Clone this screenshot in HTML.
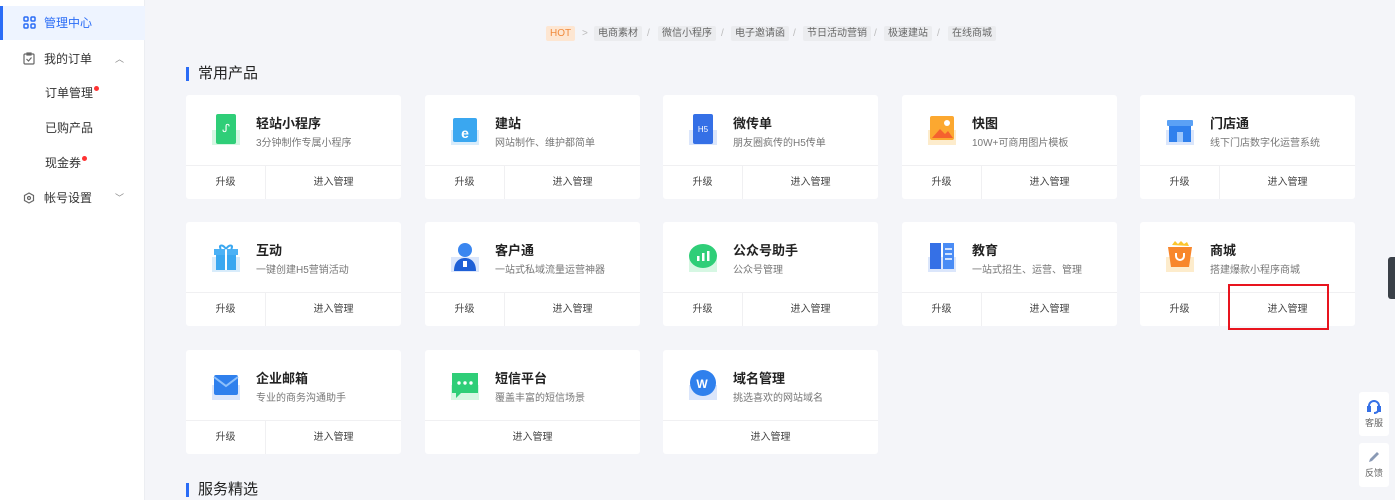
<!DOCTYPE html><html><head><meta charset="utf-8"><style>
*{margin:0;padding:0;box-sizing:border-box}
body{width:1395px;height:500px;overflow:hidden;background:#f4f5f9;font-family:"Liberation Sans","Noto Sans CJK SC",sans-serif;position:relative}
.side{position:absolute;left:0;top:0;width:145px;height:500px;background:#fff;border-right:1px solid #eceef2}
.si{position:absolute;left:0;width:145px;height:34px;line-height:34px;font-size:12px;color:#333}
.act{background:#eef4ff;color:#2a6cf6;border-left:3px solid #2a6cf6}
.dot{display:inline-block;width:5px;height:5px;border-radius:50%;background:#f33;vertical-align:top;margin-top:10px;margin-left:1px}
.bc{position:absolute;top:26px;font-size:10px;color:#666;height:15px;line-height:15px;background:#ebecef;padding:0 4px;border-radius:2px}
.sep{position:absolute;top:26px;font-size:10px;color:#bbb;line-height:15px}
h2{position:absolute;left:186px;font-size:15px;font-weight:normal;color:#222;padding-left:9px;border-left:3px solid #2a6cf6;line-height:14px}
.card{position:absolute;width:215px;height:104px;background:#fff;border-radius:3px}
.ic{position:absolute;left:24px;top:17px;width:32px;height:34px}
.t{position:absolute;left:70px;top:18px;font-size:13px;font-weight:bold;color:#222}
.d{position:absolute;left:70px;top:39px;font-size:10px;color:#777}
.bt{position:absolute;left:0;top:70px;width:215px;height:34px;border-top:1px solid #f0f0f2;font-size:10px;color:#444;line-height:33px}
.up{position:absolute;left:0;width:80px;text-align:center;border-right:1px solid #f0f0f2;height:33px}
.mg{position:absolute;left:80px;width:135px;text-align:center}
.mg2{position:absolute;left:0;width:215px;text-align:center}
.fl{position:absolute;left:1359px;width:30px;height:44px;background:#fff;border-radius:3px;font-size:9px;color:#666;text-align:center}
</style></head><body>
<div class="side">
<div class="si act" style="top:6px;padding-left:20px"><svg width="13" height="13" viewBox="0 0 13 13" style="vertical-align:-2px;margin-right:8px" fill="none" stroke="#2a6cf6" stroke-width="1.5"><rect x="1" y="1" width="4" height="4" rx="1"/><rect x="8" y="1" width="4" height="4" rx="1"/><rect x="1" y="8" width="4" height="4" rx="1"/><rect x="8" y="8" width="4" height="4" rx="1"/></svg>管理中心</div>
<div class="si" style="top:42px;padding-left:23px"><svg width="12" height="13" viewBox="0 0 12 13" style="vertical-align:-2px;margin-right:9px" fill="none" stroke="#666" stroke-width="1.2"><rect x="1" y="2" width="10" height="10" rx="1"/><rect x="4" y="1" width="4" height="2"/><path d="M3.5 7l2 2 3-3.5"/></svg>我的订单<span style="position:absolute;left:115px;color:#888;font-size:9px">︿</span></div>
<div class="si" style="top:76px;padding-left:45px">订单管理<span class="dot"></span></div>
<div class="si" style="top:111px;padding-left:45px">已购产品</div>
<div class="si" style="top:146px;padding-left:45px">现金券<span class="dot"></span></div>
<div class="si" style="top:181px;padding-left:23px"><svg width="12" height="12" viewBox="0 0 12 12" style="vertical-align:-2px;margin-right:9px" fill="none" stroke="#666" stroke-width="1.2"><path d="M6 1l4.5 2.5v5L6 11 1.5 8.5v-5z"/><circle cx="6" cy="6" r="1.5"/></svg>帐号设置<span style="position:absolute;left:115px;color:#888;font-size:9px">﹀</span></div>
</div>
<span class="bc" style="left:546px;background:#fde6d2;color:#f08a3c">HOT</span><span class="sep" style="left:582px">&gt;</span>
<span class="bc" style="left:594px">电商素材</span><span class="sep" style="left:647px">/</span>
<span class="bc" style="left:658px">微信小程序</span><span class="sep" style="left:721px">/</span>
<span class="bc" style="left:731px">电子邀请函</span><span class="sep" style="left:793px">/</span>
<span class="bc" style="left:803px">节日活动营销</span><span class="sep" style="left:874px">/</span>
<span class="bc" style="left:884px">极速建站</span><span class="sep" style="left:937px">/</span>
<span class="bc" style="left:948px">在线商城</span>
<h2 style="top:67px">常用产品</h2>
<h2 style="top:483px">服务精选</h2>

<div class="card" style="left:186px;top:95px"><svg class="ic" viewBox="0 0 32 34"><rect x="2" y="18" width="28" height="15" fill="#d6f7e3"/><rect x="6" y="2" width="20" height="30" rx="2" fill="#2fce78"/><text x="16" y="20" font-size="11" fill="#fff" text-anchor="middle">ᔑ</text></svg><div class="t">轻站小程序</div><div class="d">3分钟制作专属小程序</div><div class="bt"><span class="up">升级</span><span class="mg">进入管理</span></div></div>
<div class="card" style="left:425px;top:95px"><svg class="ic" viewBox="0 0 32 34"><rect x="2" y="18" width="28" height="15" fill="#d8ecfb"/><rect x="4" y="6" width="24" height="24" rx="2" fill="#3aa7f0"/><text x="16" y="26" font-size="14" fill="#fff" text-anchor="middle" font-weight="bold">e</text></svg><div class="t">建站</div><div class="d">网站制作、维护都简单</div><div class="bt"><span class="up">升级</span><span class="mg">进入管理</span></div></div>
<div class="card" style="left:663px;top:95px"><svg class="ic" viewBox="0 0 32 34"><rect x="2" y="18" width="28" height="15" fill="#dbe6fb"/><rect x="6" y="2" width="20" height="30" rx="2" fill="#3570e6"/><text x="16" y="20" font-size="8" fill="#fff" text-anchor="middle">H5</text></svg><div class="t">微传单</div><div class="d">朋友圈疯传的H5传单</div><div class="bt"><span class="up">升级</span><span class="mg">进入管理</span></div></div>
<div class="card" style="left:902px;top:95px"><svg class="ic" viewBox="0 0 32 34"><rect x="2" y="18" width="28" height="15" fill="#fdeccc"/><rect x="4" y="4" width="24" height="24" rx="2" fill="#fca830"/><path d="M6 26l8-9 5 5 3-3 5 7z" fill="#f5622e"/><circle cx="21" cy="11" r="3" fill="#fff"/></svg><div class="t">快图</div><div class="d">10W+可商用图片模板</div><div class="bt"><span class="up">升级</span><span class="mg">进入管理</span></div></div>
<div class="card" style="left:1140px;top:95px"><svg class="ic" viewBox="0 0 32 34"><rect x="2" y="18" width="28" height="15" fill="#dbe6fb"/><rect x="3" y="8" width="26" height="6" rx="1" fill="#5ba1f5"/><rect x="5" y="14" width="22" height="16" fill="#2f80ed"/><rect x="13" y="20" width="6" height="10" fill="#9cc6fb"/></svg><div class="t">门店通</div><div class="d">线下门店数字化运营系统</div><div class="bt"><span class="up">升级</span><span class="mg">进入管理</span></div></div>

<div class="card" style="left:186px;top:222px"><svg class="ic" viewBox="0 0 32 34"><rect x="2" y="18" width="28" height="15" fill="#d8ecfb"/><rect x="4" y="10" width="24" height="6" fill="#4bb1f5"/><rect x="6" y="16" width="20" height="15" fill="#3aa7f0"/><rect x="15" y="10" width="2" height="21" fill="#fff"/><path d="M16 10c-4-6-8-3-5 0M16 10c4-6 8-3 5 0" stroke="#3aa7f0" stroke-width="2" fill="none"/></svg><div class="t">互动</div><div class="d">一键创建H5营销活动</div><div class="bt"><span class="up">升级</span><span class="mg">进入管理</span></div></div>
<div class="card" style="left:425px;top:222px"><svg class="ic" viewBox="0 0 32 34"><rect x="2" y="18" width="28" height="15" fill="#dbe6fb"/><circle cx="16" cy="11" r="7" fill="#3a86f0"/><path d="M5 32c0-9 5-13 11-13s11 4 11 13z" fill="#1e5fd6"/><rect x="14" y="22" width="4" height="6" fill="#fff"/></svg><div class="t">客户通</div><div class="d">一站式私域流量运营神器</div><div class="bt"><span class="up">升级</span><span class="mg">进入管理</span></div></div>
<div class="card" style="left:663px;top:222px"><svg class="ic" viewBox="0 0 32 34"><rect x="2" y="20" width="28" height="13" fill="#d6f7e3"/><ellipse cx="16" cy="17" rx="14" ry="12" fill="#2fce78"/><rect x="10" y="17" width="2.5" height="5" fill="#fff"/><rect x="15" y="14" width="2.5" height="8" fill="#fff"/><rect x="20" y="12" width="2.5" height="10" fill="#fff"/></svg><div class="t">公众号助手</div><div class="d">公众号管理</div><div class="bt"><span class="up">升级</span><span class="mg">进入管理</span></div></div>
<div class="card" style="left:902px;top:222px"><svg class="ic" viewBox="0 0 32 34"><rect x="2" y="18" width="28" height="15" fill="#dbe6fb"/><rect x="4" y="4" width="11" height="26" fill="#3570e6"/><rect x="17" y="4" width="11" height="26" fill="#4a8cf5"/><path d="M19 10h7M19 15h7M19 20h7" stroke="#fff" stroke-width="1.5"/></svg><div class="t">教育</div><div class="d">一站式招生、运营、管理</div><div class="bt"><span class="up">升级</span><span class="mg">进入管理</span></div></div>
<div class="card" style="left:1140px;top:222px"><svg class="ic" viewBox="0 0 32 34"><rect x="2" y="18" width="28" height="15" fill="#fdeccc"/><path d="M8 6l3-4 3 3 3-3 3 3 3-2 2 4z" fill="#fcc52e"/><path d="M4 8h24l-3 20H7z" fill="#f8872c"/><path d="M12 14v3a4 4 0 008 0v-3" stroke="#fff" stroke-width="2" fill="none"/></svg><div class="t">商城</div><div class="d">搭建爆款小程序商城</div><div class="bt"><span class="up">升级</span><span class="mg">进入管理</span></div></div>

<div class="card" style="left:186px;top:350px"><svg class="ic" viewBox="0 0 32 34"><rect x="2" y="18" width="28" height="15" fill="#dbe6fb"/><rect x="4" y="8" width="24" height="20" rx="2" fill="#2f80ed"/><path d="M4 10l12 9 12-9" stroke="#8ec0fb" stroke-width="2" fill="none"/></svg><div class="t">企业邮箱</div><div class="d">专业的商务沟通助手</div><div class="bt"><span class="up">升级</span><span class="mg">进入管理</span></div></div>
<div class="card" style="left:425px;top:350px"><svg class="ic" viewBox="0 0 32 34"><rect x="2" y="18" width="28" height="15" fill="#d6f7e3"/><path d="M3 6h26v20H12l-5 5v-5H3z" fill="#2fce78"/><circle cx="10" cy="16" r="1.7" fill="#fff"/><circle cx="16" cy="16" r="1.7" fill="#fff"/><circle cx="22" cy="16" r="1.7" fill="#fff"/></svg><div class="t">短信平台</div><div class="d">覆盖丰富的短信场景</div><div class="bt"><span class="mg2">进入管理</span></div></div>
<div class="card" style="left:663px;top:350px"><svg class="ic" viewBox="0 0 32 34"><rect x="2" y="18" width="28" height="15" fill="#dbe6fb"/><circle cx="16" cy="16" r="13" fill="#2f80ed"/><text x="15" y="21" font-size="12" font-weight="bold" fill="#fff" text-anchor="middle">W</text></svg><div class="t">域名管理</div><div class="d">挑选喜欢的网站域名</div><div class="bt"><span class="mg2">进入管理</span></div></div>

<div style="position:absolute;left:1228px;top:284px;width:101px;height:46px;border:2px solid #e8141e"></div>
<div style="position:absolute;left:1388px;top:257px;width:7px;height:42px;background:#3a4048;border-radius:3px 0 0 3px"></div>
<div class="fl" style="top:392px"><svg width="16" height="16" viewBox="0 0 16 16" style="margin-top:6px" fill="none" stroke="#3570e6" stroke-width="2"><path d="M3 10V8a5 5 0 0110 0v2"/><rect x="2" y="9" width="2" height="4" fill="#3570e6"/><rect x="12" y="9" width="2" height="4" fill="#3570e6"/><path d="M12 13c-1 2-3 2-4 2"/></svg><div>客服</div></div>
<div class="fl" style="top:443px"><svg width="14" height="14" viewBox="0 0 14 14" style="margin-top:7px"><path d="M2 12l1-3 7-7 2 2-7 7z" fill="#8a9ab5"/></svg><div>反馈</div></div>
</body></html>
